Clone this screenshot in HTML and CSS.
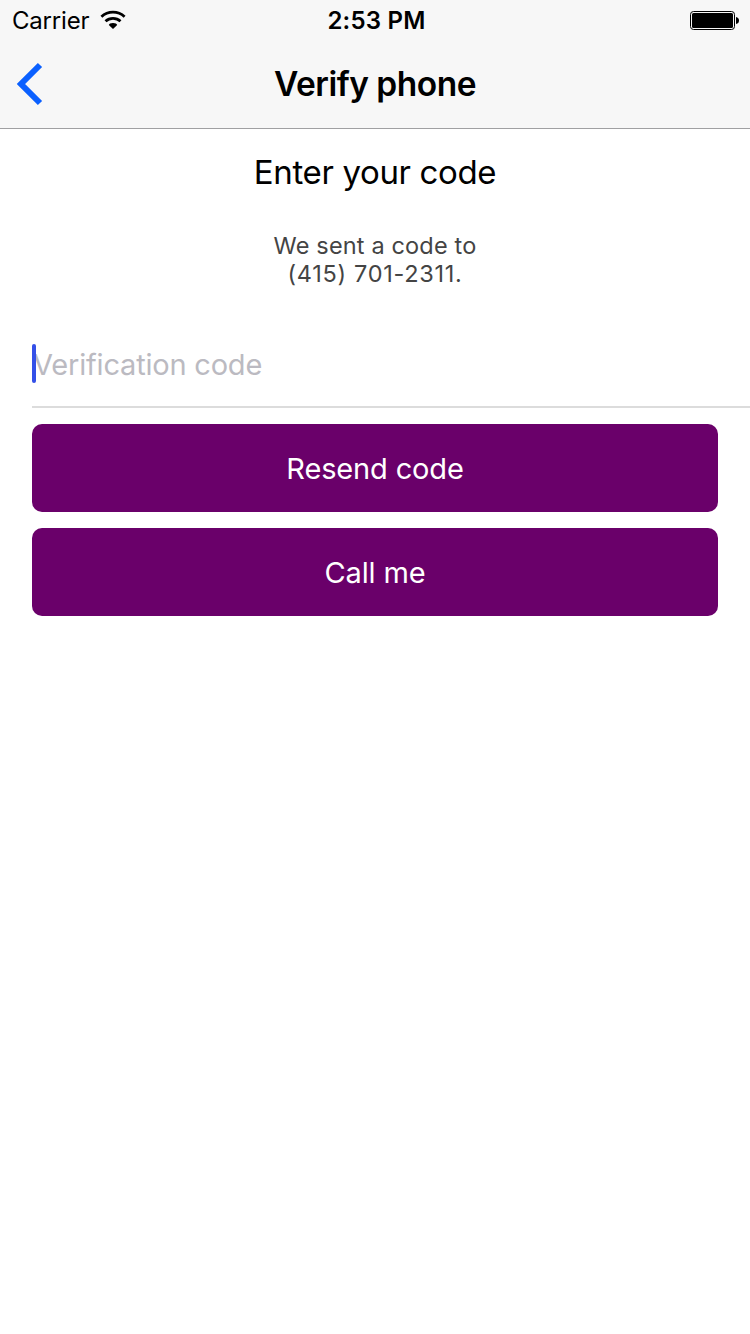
FILE: index.html
```html
<!DOCTYPE html>
<html lang="en">
<head>
<meta charset="utf-8">
<title>Verify phone</title>
<link rel="stylesheet" href="styles.css">
</head>
<body>
<header class="header">
  <div class="status">
    <div class="status-left"><span class="carrier">Carrier</span>
      <svg class="wifi" width="26" height="20" viewBox="0 0 26 20"><path d="M13 19l4.200-4q-.5-2-4.200-2T8.800 15z"/><path class="arc" d="M5.500 11.300a11.200 11.200 0 0 1 15 0M1.400 6.700a17.200 17.200 0 0 1 23.200 0"/></svg>
    </div>
    <time class="clock">2:53 PM</time>
    <svg class="battery" width="50" height="20" viewBox="0 0 50 20"><rect class="shell" x=".5" y="1.500" width="44" height="18" rx="3"/><rect x="2" y="3" width="41" height="15" rx="1.5"/><path d="M46 7q3 .5 3 3.500t-3 3.500z"/></svg>
  </div>
  <nav class="nav">
    <button class="back" aria-label="Back"><svg width="28" height="44" viewBox="0 0 28 44"><path d="M25 3L6 22 25 41"/></svg></button>
    <h1 class="title">Verify phone</h1>
  </nav>
</header>
<main class="content">
  <h2 class="heading">Enter your code</h2>
  <p class="message"><span class="line-a">We sent a code to</span><br><span class="line-b">(415) 701-2311.</span></p>
  <div class="field"><span class="placeholder">Verification code</span><span class="caret"></span></div>
  <div class="actions">
    <button class="action">Resend code</button>
    <button class="action">Call me</button>
  </div>
</main>
</body>
</html>
```

FILE: styles.css
```css
* { box-sizing: border-box; }
body { margin: 0; height: 1334px; background: #fff; color: #000; font-family: Inter, sans-serif; }
button { margin: 0; padding: 0; border: 0; font: inherit; }
.header { height: 129px; background: #f7f7f7; border-bottom: 1px solid #a0a0a2; }
.status { display: grid; grid-template-columns: 1fr auto 1fr; height: 40px; align-items: center; padding: 0 10px 0 12px; }
.status-left { display: flex; align-items: center; gap: 10.5px; }
.carrier { padding-top: 2px; font-size: 24px; line-height: 38px; letter-spacing: -.2px; }
.wifi .arc { fill: none; stroke: #000; stroke-width: 2.8; }
.clock { padding: 2px 0 0 1px; font-size: 24px; line-height: 38px; font-weight: 600; letter-spacing: .2px; }
.battery { justify-self: end; }
.battery .shell { fill: none; stroke: #000; }
.nav { display: grid; grid-template-columns: 75px 1fr 75px; height: 88px; align-items: center; }
.back { display: flex; padding-left: 15px; background: none; }
.back path { fill: none; stroke: #0a60ff; stroke-width: 6; }
.title { margin: 0; font-size: 33.5px; line-height: 44px; font-weight: 600; text-align: center; letter-spacing: -.5px; }
.heading { margin: 0; padding-top: 21px; font-size: 33px; line-height: 45px; font-weight: 400; text-align: center; letter-spacing: -.35px; }
.message { margin: 37px 0 0; font-size: 23.5px; line-height: 28px; color: #444; text-align: center; }
.line-a { letter-spacing: .16px; }
.line-b { letter-spacing: .7px; }
.field { position: relative; height: 88px; margin: 32px 0 0 32px; border-bottom: 2px solid #dcdcdc; line-height: 90px; }
.placeholder { margin-left: 1px; font-size: 29px; color: #bbbac1; letter-spacing: -.2px; }
.caret { position: absolute; left: 0; top: 24px; width: 4px; height: 39px; border-radius: 2px; background: #3450e8; }
.actions { display: grid; gap: 16px; padding: 16px 32px; }
.action { height: 88px; padding-top: 1px; border-radius: 10px; background: #6a006a; color: #fff; font-size: 29px; line-height: 87px; letter-spacing: -.15px; }
```
